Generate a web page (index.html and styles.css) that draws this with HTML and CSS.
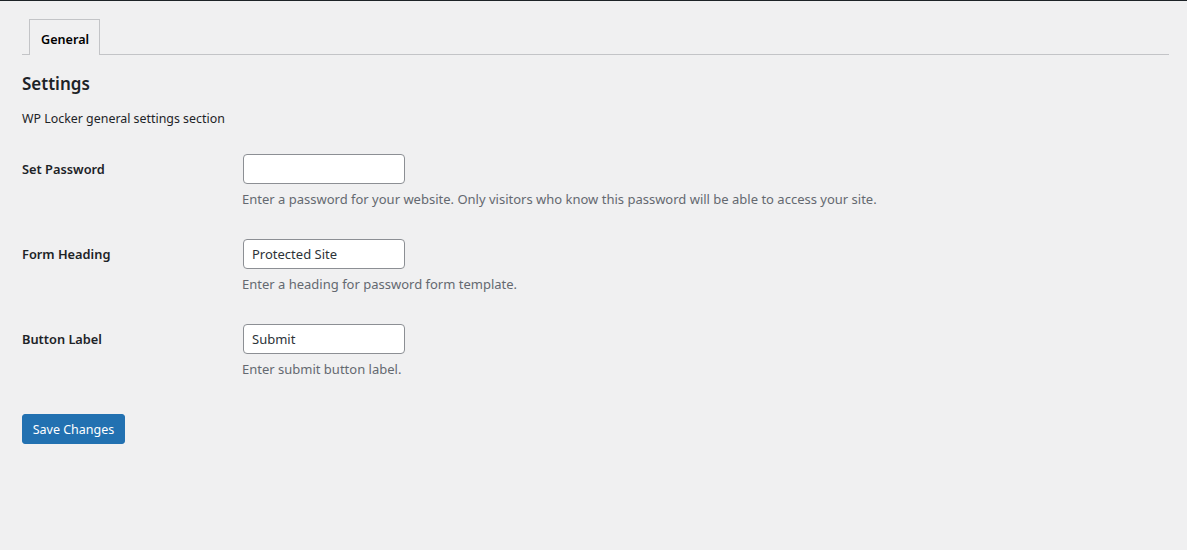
FILE: index.html
```html
<!DOCTYPE html>
<html lang="en">
<head>
<meta charset="utf-8">
<title>WP Locker Settings</title>
<link rel="stylesheet" href="styles.css">
</head>
<body>
<div class="topbar"></div>
<div class="wrap">
  <nav class="tabs">
    <a class="tab tab-active">General</a>
  </nav>
  <h2 class="title">Settings</h2>
  <p class="intro">WP Locker general settings section</p>
  <form class="form">
    <div class="row">
      <label class="label" for="pw">Set Password</label>
      <div class="field">
        <input class="input" id="pw" type="text" value="">
        <p class="desc">Enter a password for your website. Only visitors who know this password will be able to access your site.</p>
      </div>
    </div>
    <div class="row">
      <label class="label" for="heading">Form Heading</label>
      <div class="field">
        <input class="input" id="heading" type="text" value="Protected Site">
        <p class="desc">Enter a heading for password form template.</p>
      </div>
    </div>
    <div class="row">
      <label class="label" for="btn">Button Label</label>
      <div class="field">
        <input class="input" id="btn" type="text" value="Submit">
        <p class="desc">Enter submit button label.</p>
      </div>
    </div>
    <div class="submit">
      <button class="button" type="button">Save Changes</button>
    </div>
  </form>
</div>
</body>
</html>
```

FILE: styles.css
```css
html, body {
  margin: 0;
  padding: 0;
}
body {
  background: #f0f0f1;
  color: #1d2327;
  font-family: "Noto Sans", "Open Sans", sans-serif;
  font-size: 13px;
  line-height: 1.4;
  height: 550px;
  overflow: hidden;
}
.topbar {
  height: 1px;
  background: #1d2327;
}
.wrap {
  padding: 0 18px 0 22px;
}
.tabs {
  display: flex;
  margin-top: 18px;
  padding-left: 7px;
  border-bottom: 1px solid #c3c4c7;
}
.tab {
  display: block;
  padding: 8px 10px 3px 11px;
  margin-bottom: -1px;
  border: 1px solid #c3c4c7;
  border-bottom: none;
  background: #f0f0f1;
  font-size: 12.6px;
  font-weight: 600;
  line-height: 24px;
  color: #000;
}
.title {
  margin: 18px 0 0;
  font-size: 17px;
  font-weight: 600;
  line-height: 22px;
}
.intro {
  margin: 14px 0 0;
  line-height: 19.5px;
  font-size: 12.4px;
}
.form {
  margin-top: 10px;
}
.row {
  display: flex;
  padding: 15px 0;
}
.label {
  width: 220px;
  flex: none;
  padding-top: 7px;
  font-size: 12.8px;
  font-weight: 600;
  line-height: 17px;
}
.field {
  display: flex;
  flex-direction: column;
}
.input {
  box-sizing: border-box;
  width: 162px;
  height: 30px;
  margin: 0 0 0 1px;
  padding: 1px 8px 0;
  border: 1px solid #8c8f94;
  border-radius: 4px;
  background: #fff;
  color: #2c3338;
  font-family: inherit;
  font-size: 13px;
  line-height: 27px;
}
.desc {
  margin: 5px 0 0;
  color: #646970;
  font-size: 13px;
  line-height: 20px;
}
.submit {
  margin-top: 20px;
}
.button {
  box-sizing: border-box;
  height: 30px;
  width: 103px;
  padding: 2px 0 0;
  border: 1px solid #2271b1;
  border-radius: 3px;
  background: #2271b1;
  color: #fff;
  font-family: inherit;
  font-size: 12.5px;
  line-height: 26px;
  white-space: nowrap;
}
```
